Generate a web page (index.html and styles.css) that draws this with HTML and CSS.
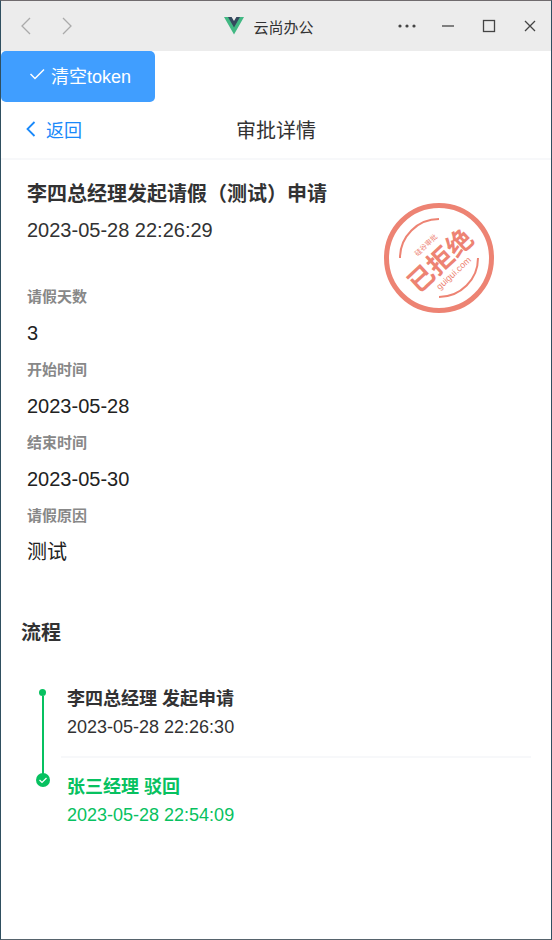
FILE: index.html
```html
<!DOCTYPE html>
<html lang="zh-CN">
<head>
<meta charset="utf-8">
<meta name="viewport" content="width=device-width, initial-scale=1">
<title>云尚办公</title>
<link rel="stylesheet" href="styles.css">
</head>
<body>
<div class="window">
  <header class="titlebar">
    <div class="history">
      <button class="icon-btn" type="button" aria-label="后退"><svg width="24" height="24" viewBox="0 0 24 24"><path d="M16 4L8 12L16 20"/></svg></button>
      <button class="icon-btn" type="button" aria-label="前进"><svg width="24" height="24" viewBox="0 0 24 24"><path d="M8 4L16 12L8 20"/></svg></button>
    </div>
    <div class="app-name">
      <svg width="20" height="18" viewBox="0 0 20 18"><path fill="#41b883" d="M0 0H5L10 8L15 0H20L10 17.500Z"/><path fill="#35495e" d="M4 0H7.600L10 4L12.400 0H16L10 10.500Z"/></svg>
      <span>云尚办公</span>
    </div>
    <div class="controls">
      <button class="icon-btn" type="button" aria-label="更多"><svg width="24" height="24" viewBox="0 0 24 24"><g fill="#444" stroke="none"><circle cx="5" cy="12" r="1.600"/><circle cx="12" cy="12" r="1.600"/><circle cx="19" cy="12" r="1.600"/></g></svg></button>
      <button class="icon-btn" type="button" aria-label="最小化"><svg width="24" height="24" viewBox="0 0 24 24"><path d="M6 12H18"/></svg></button>
      <button class="icon-btn" type="button" aria-label="最大化"><svg width="24" height="24" viewBox="0 0 24 24"><rect x="6.500" y="6.500" width="11" height="11"/></svg></button>
      <button class="icon-btn" type="button" aria-label="关闭"><svg width="24" height="24" viewBox="0 0 24 24"><path d="M7 7L17 17M17 7L7 17"/></svg></button>
    </div>
  </header>

  <button class="clear-token" type="button">
    <svg width="16" height="16" viewBox="0 0 16 16"><path d="M1.500 7L6 11.500L15 2.500"/></svg>
    <span>清空token</span>
  </button>

  <nav class="navbar">
    <a class="back" href="#">
      <svg width="10" height="16" viewBox="0 0 10 16"><path d="M8.500 1L1.500 8L8.500 15"/></svg>
      <span>返回</span>
    </a>
    <h1 class="nav-title">审批详情</h1>
  </nav>

  <main class="content">
    <section class="detail">
      <div class="summary">
        <h2>李四总经理发起请假（测试）申请</h2>
        <p>2023-05-28 22:26:29</p>
      </div>
      <dl class="fields">
        <dt>请假天数</dt><dd>3</dd>
        <dt>开始时间</dt><dd>2023-05-28</dd>
        <dt>结束时间</dt><dd>2023-05-30</dd>
        <dt>请假原因</dt><dd>测试</dd>
      </dl>
      <svg class="stamp" width="110" height="110" viewBox="0 0 110 110" role="img" aria-label="已拒绝">
        <g class="stamp-lines">
          <circle cx="55" cy="55" r="52.500" stroke-width="5"/>
          <path d="M16 55A39 39 0 0 1 55 16M94 55A39 39 0 0 1 55 94" stroke-width="2"/>
        </g>
        <g class="stamp-text" transform="rotate(-43 56 57)">
          <text class="stamp-small" x="56" y="39">硅谷审批</text>
          <text class="stamp-main" x="56" y="67">已拒绝</text>
          <text class="stamp-site" x="57" y="79">guigui.com</text>
        </g>
      </svg>
    </section>

    <section class="flow">
      <h2>流程</h2>
      <ol class="steps">
        <li class="step">
          <div class="marker"><span class="dot"></span><span class="line"></span></div>
          <div class="step-body"><h3>李四总经理 发起申请</h3><p>2023-05-28 22:26:30</p></div>
        </li>
        <li class="step active">
          <div class="marker"><svg width="14" height="14" viewBox="0 0 14 14"><circle cx="7" cy="7" r="7" fill="#07c160"/><path d="M3.500 7L6 9.400L10.500 5" fill="none" stroke="#fff" stroke-width="1.300"/></svg></div>
          <div class="step-body"><h3>张三经理 驳回</h3><p>2023-05-28 22:54:09</p></div>
        </li>
      </ol>
    </section>
  </main>
</div>
</body>
</html>
```
FILE: styles.css
```css
* { box-sizing: border-box; margin: 0; padding: 0; }
body {
  font-family: "Liberation Sans", "Noto Sans CJK SC", sans-serif;
  font-size: 20px;
  color: #323233;
  background: #fff;
}
button { font: inherit; border: 0; background: none; cursor: pointer; }
svg { display: block; flex: none; }
.window {
  min-height: 100vh;
  border: 1px solid #2f4f60;
  border-top-color: #706b6e;
  border-bottom-color: #56636c;
}

.titlebar {
  display: grid;
  grid-template-columns: 1fr auto 1fr;
  align-items: center;
  height: 50px;
  padding: 0 9px 0 13px;
  background: #ececec;
}
.icon-btn svg { fill: none; stroke: #444; stroke-width: 1.3; }
.history { display: flex; gap: 17px; }
.history .icon-btn svg { stroke: #aaa; }
.app-name { display: flex; align-items: center; gap: 9px; margin-right: 18px; font-size: 15px; }
.controls { display: flex; justify-content: flex-end; gap: 17px; }

.clear-token {
  display: flex;
  align-items: center;
  gap: 6px;
  height: 51px;
  padding: 0 24px 4px 28px;
  border-radius: 5px;
  background: #409eff;
  color: #fff;
  font-size: 18px;
}
.clear-token svg { fill: none; stroke: #fff; stroke-width: 1.5; }

.navbar {
  display: grid;
  grid-template-columns: 1fr auto 1fr;
  align-items: center;
  height: 58px;
  padding: 0 25px 2px;
  border-bottom: 2px solid #f7f8fa;
}
.back {
  display: flex;
  align-items: center;
  gap: 10px;
  color: #1989fa;
  font-size: 18px;
  text-decoration: none;
}
.back svg { fill: none; stroke: #1989fa; stroke-width: 1.8; }
.nav-title { font-size: 20px; font-weight: 400; }

.content { padding: 16px 20px; }
.detail { position: relative; padding: 0 6px; }
.summary { line-height: 36px; }
.summary h2, .flow h2 { font-size: 20px; }
.fields { margin-top: 31px; }
.fields dt { font-size: 15px; line-height: 36px; font-weight: 700; color: #888; }
.fields dd { line-height: 37px; color: #222; }
.stamp { position: absolute; top: 27px; right: 37px; }
.stamp-lines { fill: none; stroke: #ed8373; }
.stamp-text { fill: #ed8373; text-anchor: middle; }
.stamp-small { font-size: 7px; }
.stamp-main { font-size: 26px; font-weight: 700; }
.stamp-site { font-size: 9px; }

.flow { margin-top: 47px; }
.flow h2 { line-height: 30px; }
.steps { list-style: none; margin-top: 37px; }
.step { display: flex; gap: 11px; }
.marker { display: flex; flex-direction: column; align-items: center; width: 29px; padding-left: 14px; }
.dot { width: 7px; height: 7px; margin-top: 4px; border-radius: 50%; background: #07c160; }
.line { flex: 1; width: 2px; margin-bottom: -16px; background: #07c160; }
.step-body {
  flex: 1;
  padding: 0 6px 15px;
  border-bottom: 2px solid #f7f8fa;
  font-size: 18px;
  line-height: 28px;
}
.step-body h3 { font-size: 18px; }
.active .step-body { padding-top: 15px; border: 0; color: #07c160; }
.active .marker { padding-top: 15px; }
```
